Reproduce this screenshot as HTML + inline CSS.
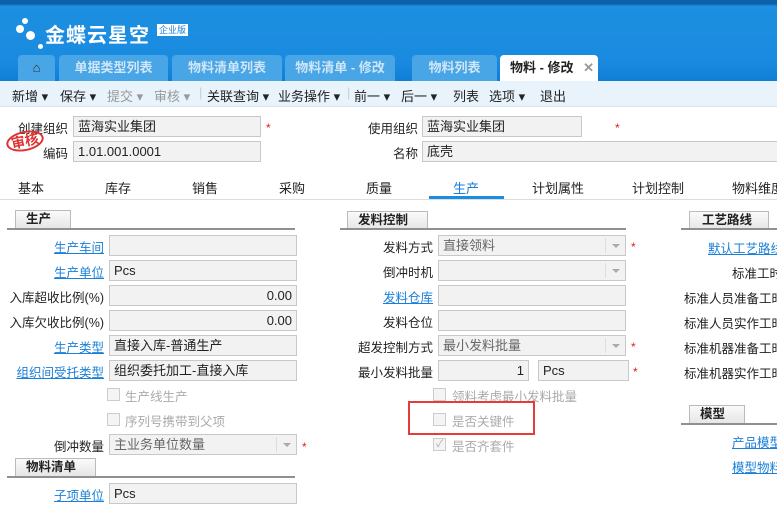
<!DOCTYPE html><html><head><meta charset="utf-8"><style>
*{margin:0;padding:0;box-sizing:border-box}
body{width:777px;height:505px;overflow:hidden;position:relative;background:#fff;font-family:"Liberation Sans","Noto Sans CJK SC",sans-serif;font-size:13px;color:#222}
.a{position:absolute;white-space:nowrap}
.hdr{left:0;top:0;width:777px;height:81px;background:linear-gradient(#0b62a8 0,#0b62a8 4px,#1d8fe0 6px,#1a8be0 60px,#0f7fd6 81px)}
.tab{top:55px;height:26px;background:#48a5e6;border-radius:4px 4px 0 0;color:#cfe6f8;font-size:13px;font-weight:bold;line-height:26px;text-align:center}
.tb{left:0;top:81px;width:777px;height:26px;background:#e8f3fb;border-bottom:1px solid #d8e6f0}
.tb span{position:absolute;top:5px;font-size:13px;white-space:nowrap}
.dis{color:#999}
.in{position:absolute;height:21px;border:1px solid #c8c8c8;background:#f2f2f2;font-size:13px;line-height:19px;padding:0 4px;white-space:nowrap;overflow:hidden}
.lb{position:absolute;text-align:right;font-size:12.5px;white-space:nowrap}
.lk{color:#1a7fd8;text-decoration:underline}
.req{position:absolute;color:#e02020;font-size:12px}
.sec{position:absolute;height:18px;border:1px solid #bbb;border-bottom:none;background:linear-gradient(#fafafa,#e6e6e6);font-weight:bold;font-size:12.5px;line-height:17px;padding-left:10px;white-space:nowrap}
.ln{position:absolute;height:2px;background:#909090}
.dd{position:absolute;top:2px;right:0;width:20px;height:15px;border-left:1px solid #ddd}
.dd:after{content:"";position:absolute;left:6px;top:6px;border:4px solid transparent;border-top:4px solid #aaa}
.cb{position:absolute;width:13px;height:13px;border:1px solid #ccc;background:#f4f4f4}
.ct{position:absolute;color:#aaa;font-size:12.5px;white-space:nowrap}
.ti{position:absolute;top:178px;font-size:13px;white-space:nowrap}
</style></head><body>
<div class="a hdr"></div>
<div class="a" style="left:22px;top:18px;width:6px;height:6px;border-radius:50%;background:#fff"></div>
<div class="a" style="left:16px;top:25px;width:8px;height:8px;border-radius:50%;background:#fff"></div>
<div class="a" style="left:26px;top:31px;width:9px;height:9px;border-radius:50%;background:#fff"></div>
<div class="a" style="left:38px;top:44px;width:5px;height:5px;border-radius:50%;background:#fff"></div>
<div class="a" style="left:45px;top:19px;color:#fff;font-size:20px;font-weight:bold;letter-spacing:1px">金蝶云星空</div>
<div class="a" style="left:157px;top:24px;background:#fff;color:#1a7fd8;font-size:9px;padding:0 2px;line-height:12px">企业版</div>
<div class="a tab" style="left:18px;width:37px;color:#333">&#8962;</div>
<div class="a tab" style="left:59px;width:109px">单据类型列表</div>
<div class="a tab" style="left:172px;width:110px">物料清单列表</div>
<div class="a tab" style="left:285px;width:110px">物料清单 - 修改</div>
<div class="a tab" style="left:412px;width:85px">物料列表</div>
<div class="a tab" style="left:500px;width:98px;background:#fff;color:#222;text-align:left;padding-left:10px">物料 - 修改 <span style="color:#999;margin-left:6px">✕</span></div>
<div class="a tb">
<span style="left:12px">新增 ▾</span><span style="left:60px">保存 ▾</span><span style="left:107px" class="dis">提交 ▾</span><span style="left:154px" class="dis">审核 ▾</span>
<span style="left:199px;top:4px;color:#ccc">|</span>
<span style="left:207px">关联查询 ▾</span><span style="left:278px">业务操作 ▾</span>
<span style="left:347px;top:4px;color:#ccc">|</span>
<span style="left:354px">前一 ▾</span><span style="left:401px">后一 ▾</span><span style="left:453px">列表</span><span style="left:489px">选项 ▾</span><span style="left:540px">退出</span>
</div>
<div class="lb" style="left:0;width:68px;top:118px">创建组织</div>
<div class="in" style="left:73px;top:116px;width:188px">蓝海实业集团</div>
<div class="req" style="left:266px;top:121px">*</div>
<div class="lb" style="left:0;width:68px;top:143px">编码</div>
<div class="in" style="left:73px;top:141px;width:188px">1.01.001.0001</div>
<div class="a" style="left:6px;top:131px;border:2px solid #d33;border-radius:50%;color:#d33;font-weight:bold;font-size:14px;padding:0 3px;line-height:16px;transform:rotate(-12deg)">审核</div>
<div class="lb" style="left:350px;width:68px;top:118px">使用组织</div>
<div class="in" style="left:422px;top:116px;width:160px">蓝海实业集团</div>
<div class="req" style="left:615px;top:121px">*</div>
<div class="lb" style="left:350px;width:68px;top:143px">名称</div>
<div class="in" style="left:422px;top:141px;width:360px">底壳</div>
<span class="ti" style="left:18px">基本</span><span class="ti" style="left:105px">库存</span><span class="ti" style="left:192px">销售</span><span class="ti" style="left:279px">采购</span><span class="ti" style="left:366px">质量</span><span class="ti" style="left:453px;color:#1a7fd8">生产</span><span class="ti" style="left:532px">计划属性</span><span class="ti" style="left:632px">计划控制</span><span class="ti" style="left:732px">物料维度</span>
<div class="a" style="left:0;top:199px;width:777px;height:1px;background:#ddd"></div>
<div class="a" style="left:429px;top:196px;width:75px;height:3px;background:#1a8de0"></div>
<div class="sec" style="left:15px;top:210px;width:56px">生产</div><div class="ln" style="left:7px;top:228px;width:288px"></div>
<div class="lb lk" style="left:0;width:104px;top:237px">生产车间</div><div class="in" style="left:109px;top:235px;width:188px"></div>
<div class="lb lk" style="left:0;width:104px;top:262px">生产单位</div><div class="in" style="left:109px;top:260px;width:188px">Pcs</div>
<div class="lb" style="left:0;width:104px;top:287px">入库超收比例(%)</div><div class="in" style="left:109px;top:285px;width:188px;text-align:right">0.00</div>
<div class="lb" style="left:0;width:104px;top:312px">入库欠收比例(%)</div><div class="in" style="left:109px;top:310px;width:188px;text-align:right">0.00</div>
<div class="lb lk" style="left:0;width:104px;top:337px">生产类型</div><div class="in" style="left:109px;top:335px;width:188px">直接入库-普通生产</div>
<div class="lb lk" style="left:0;width:104px;top:362px">组织间受托类型</div><div class="in" style="left:109px;top:360px;width:188px">组织委托加工-直接入库</div>
<div class="cb" style="left:107px;top:388px"></div><div class="ct" style="left:125px;top:386px">生产线生产</div>
<div class="cb" style="left:107px;top:413px"></div><div class="ct" style="left:125px;top:411px">序列号携带到父项</div>
<div class="lb" style="left:0;width:104px;top:436px">倒冲数量</div><div class="in" style="left:109px;top:434px;width:188px;color:#666">主业务单位数量<div class="dd"></div></div><div class="req" style="left:302px;top:440px">*</div>
<div class="sec" style="left:15px;top:458px;width:81px">物料清单</div><div class="ln" style="left:7px;top:476px;width:288px"></div>
<div class="lb lk" style="left:0;width:104px;top:485px">子项单位</div><div class="in" style="left:109px;top:483px;width:188px">Pcs</div>
<div class="sec" style="left:347px;top:211px;width:81px">发料控制</div><div class="ln" style="left:340px;top:228px;width:286px"></div>
<div class="lb" style="left:330px;width:103px;top:237px">发料方式</div><div class="in" style="left:438px;top:235px;width:188px;color:#666">直接领料<div class="dd"></div></div><div class="req" style="left:631px;top:240px">*</div>
<div class="lb" style="left:330px;width:103px;top:262px">倒冲时机</div><div class="in" style="left:438px;top:260px;width:188px"><div class="dd"></div></div>
<div class="lb lk" style="left:330px;width:103px;top:287px">发料仓库</div><div class="in" style="left:438px;top:285px;width:188px"></div>
<div class="lb" style="left:330px;width:103px;top:312px">发料仓位</div><div class="in" style="left:438px;top:310px;width:188px"></div>
<div class="lb" style="left:330px;width:103px;top:337px">超发控制方式</div><div class="in" style="left:438px;top:335px;width:188px;color:#666">最小发料批量<div class="dd"></div></div><div class="req" style="left:631px;top:340px">*</div>
<div class="lb" style="left:330px;width:103px;top:362px">最小发料批量</div><div class="in" style="left:438px;top:360px;width:91px;text-align:right">1</div><div class="in" style="left:538px;top:360px;width:91px">Pcs</div><div class="req" style="left:633px;top:365px">*</div>
<div class="cb" style="left:433px;top:388px"></div><div class="ct" style="left:452px;top:386px">领料考虑最小发料批量</div>
<div class="cb" style="left:433px;top:413px"></div><div class="ct" style="left:452px;top:411px">是否关键件</div>
<div class="a" style="left:408px;top:401px;width:127px;height:34px;border:2px solid #e83a3a"></div>
<div class="cb" style="left:433px;top:438px;color:#aaa;font-size:10px;line-height:11px;text-align:center">✓</div><div class="ct" style="left:452px;top:436px">是否齐套件</div>
<div class="sec" style="left:689px;top:211px;width:80px;padding-left:12px">工艺路线</div><div class="ln" style="left:681px;top:228px;width:96px"></div>
<div class="a lk" style="left:708px;top:238px;font-size:12.5px">默认工艺路线</div>
<div class="a" style="left:732px;top:263px;font-size:12.5px">标准工时</div>
<div class="a" style="left:684px;top:288px;font-size:12.5px">标准人员准备工时</div>
<div class="a" style="left:684px;top:313px;font-size:12.5px">标准人员实作工时</div>
<div class="a" style="left:684px;top:338px;font-size:12.5px">标准机器准备工时</div>
<div class="a" style="left:684px;top:363px;font-size:12.5px">标准机器实作工时</div>
<div class="sec" style="left:689px;top:405px;width:56px">模型</div><div class="ln" style="left:681px;top:423px;width:96px"></div>
<div class="a lk" style="left:732px;top:432px;font-size:12.5px">产品模型</div>
<div class="a lk" style="left:732px;top:457px;font-size:12.5px">模型物料</div>
</body></html>
